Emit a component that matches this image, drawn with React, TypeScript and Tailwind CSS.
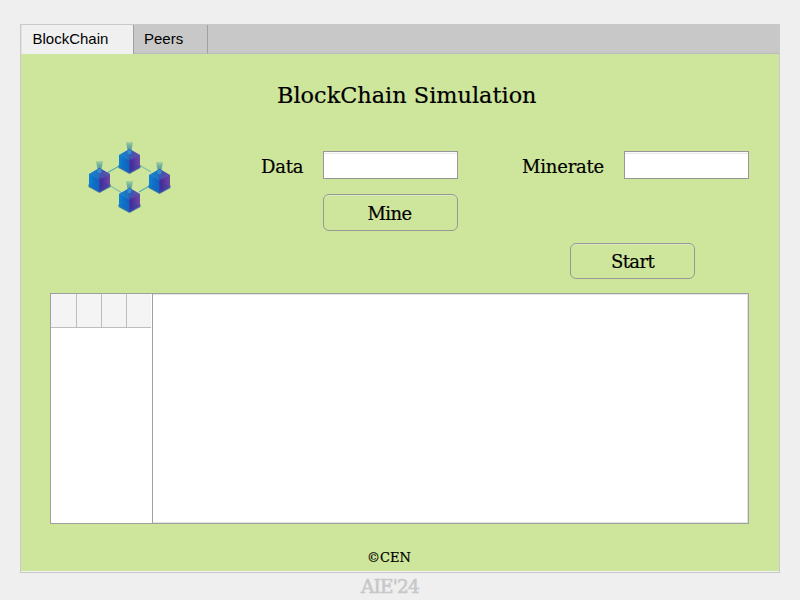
const SLAB = "font-['DejaVu_Serif',serif] leading-none whitespace-nowrap";
const INK = "[-webkit-text-stroke:0.2px]";

function Block({ x, y }: { x: number; y: number }) {
  return (
    <g transform={`translate(${x} ${y})`}>
      <path d="M-3.6-19H3.6L1.8-10H-1.8Z" fill="url(#beam)" />
      <path d="M-11 4L0 10L11 4V7L0 13L-11 7Z" fill="#1d55a3" fillOpacity="0.75" />
      <path d="M0-12L10.5-6V6L0 12L-10.5 6V-6Z" fill="url(#body)" />
      <path d="M0-12L-10.5-6L0 0Z" fill="#2a86c8" fillOpacity="0.5" />
      <path d="M0-12L10.5-6L0 0Z" fill="#4a6cb8" fillOpacity="0.5" />
      <path d="M-10.5 6L0 0V12Z" fill="#0a6fc4" fillOpacity="0.5" />
      <path d="M0 0L10.5 6L0 12Z" fill="#3a3f9f" fillOpacity="0.5" />
      <path d="M0-3L3-1V8L0 10Z" fill="#4b1f96" fillOpacity="0.5" />
      <circle cx="0" cy="-9" r="2.2" fill="#2b8fd0" />
    </g>
  );
}

function Logo() {
  return (
    <svg width="100" height="85" viewBox="0 0 100 85">
      <defs>
        <linearGradient id="beam" x1="0" y1="0" x2="0" y2="1">
          <stop offset="0" stopColor="#4c9b9c" stopOpacity="0.25" />
          <stop offset="0.35" stopColor="#4c9b9c" stopOpacity="0.65" />
          <stop offset="1" stopColor="#277e9e" stopOpacity="0.8" />
        </linearGradient>
        <linearGradient id="body" x1="0" y1="0" x2="1" y2="0">
          <stop offset="0" stopColor="#0a84d6" />
          <stop offset="0.4" stopColor="#1560bd" />
          <stop offset="0.65" stopColor="#51309f" />
          <stop offset="1" stopColor="#6d4aa6" />
        </linearGradient>
      </defs>
      <g stroke="#55adb0" strokeWidth="1.2">
        <path d="M27 38L41 30M59 57L71 50" />
        <path d="M59 30L71 37M29 50L42 58" strokeOpacity="0.65" />
      </g>
      <Block x={49.5} y={26} />
      <Block x={19.5} y={45} />
      <Block x={79.5} y={46} />
      <Block x={49.5} y={65} />
    </svg>
  );
}

function Field({ className }: { className: string }) {
  return (
    <input
      className={`block h-7 border border-[#979797] bg-white shadow-[inset_0_1px_0_#fafafa,inset_0_2px_0_#e9e9e9] outline-none ${className}`}
    />
  );
}

function Button({ label, className }: { label: string; className: string }) {
  return (
    <button
      className={`block rounded-[6px] border border-[#979797] bg-[#cee69c] text-[18px] tracking-[-0.6px] text-black shadow-[inset_0_1px_0_#dcebc0] ${SLAB} ${INK} ${className}`}
    >
      {label}
    </button>
  );
}

export default function App() {
  return (
    <div className="flex h-[600px] w-[800px] flex-col overflow-hidden bg-[#efefef] px-5 pt-6 text-black">
      <main className="flex h-[549px] w-[760px] shrink-0 flex-col border border-[#c9c9c9] bg-[#cee69c]">
        <nav className="flex h-[29px] shrink-0 bg-[#c8c8c8] font-['Liberation_Sans',sans-serif] text-[15px] leading-[28px]">
          <div className="w-[113px] border-r border-l border-r-[#a0a0a0] border-l-[#e4e4e4] bg-[#f0f0f0] pl-[10.5px]">
            BlockChain
          </div>
          <div className="w-[74px] border-r border-b border-r-[#a0a0a0] border-b-[#bcbcbc] pl-[10px]">
            Peers
          </div>
          <div className="grow border-b border-[#bcbcbc]" />
        </nav>

        <section className="flex grow flex-col border-b border-[#f0f0f0] px-[29px]">
          <h1 className={`h-[52px] shrink-0 pt-[30px] pl-[227px] text-[22.4px] ${SLAB} ${INK}`}>
            BlockChain Simulation
          </h1>

          <div className="mt-[29px] flex h-[158px] shrink-0">
            <div className="w-[211px] pl-[30px]">
              <Logo />
            </div>
            <div className="w-[197px] pt-[16px]">
              <div className="flex items-center">
                <label className={`w-[62px] pt-[4px] text-[18px] tracking-[-0.2px] ${SLAB} ${INK}`}>Data</label>
                <Field className="w-[135px]" />
              </div>
              <Button label="Mine" className="mt-[15px] ml-[62px] h-[37px] w-[135px] pt-[3px] pr-[2px]" />
            </div>
            <div className="ml-[64px] w-[227px] pt-[16px]">
              <div className="flex items-center">
                <label className={`w-[102px] pt-[4px] text-[18px] tracking-[-0.2px] ${SLAB} ${INK}`}>Minerate</label>
                <Field className="w-[125px]" />
              </div>
              <Button label="Start" className="mt-[64px] ml-[48px] h-[36px] w-[125px] pt-[2px]" />
            </div>
          </div>

          <div className="flex h-[231px] w-[699px] shrink-0 border border-[#a0a0a0] bg-white">
            <div className="w-[101px] pr-px">
              <div className="flex h-[34px] border-b border-[#bdbdbd] bg-[#f4f4f4]">
                <div className="w-[26px] border-r border-[#bdbdbd]" />
                <div className="w-[25px] border-r border-[#bdbdbd]" />
                <div className="w-[25px] border-r border-[#bdbdbd]" />
              </div>
            </div>
            <div className="grow border-l border-[#a0a0a0] shadow-[inset_-1px_-1px_0_#e3e3e3,inset_0_1px_0_#e3e3e3]" />
          </div>

          <div className="flex h-[47px] shrink-0 pt-[27px] pl-[317px]">
            <span className={`text-[13px] ${SLAB} ${INK}`}>©CEN</span>
          </div>
        </section>
      </main>
      <footer
        className={`pt-[5px] pl-[341px] text-[18.5px] tracking-[-0.8px] text-[#c8c8c8] [-webkit-text-stroke:0.6px] ${SLAB}`}
      >
        AIE'24
      </footer>
    </div>
  );
}
